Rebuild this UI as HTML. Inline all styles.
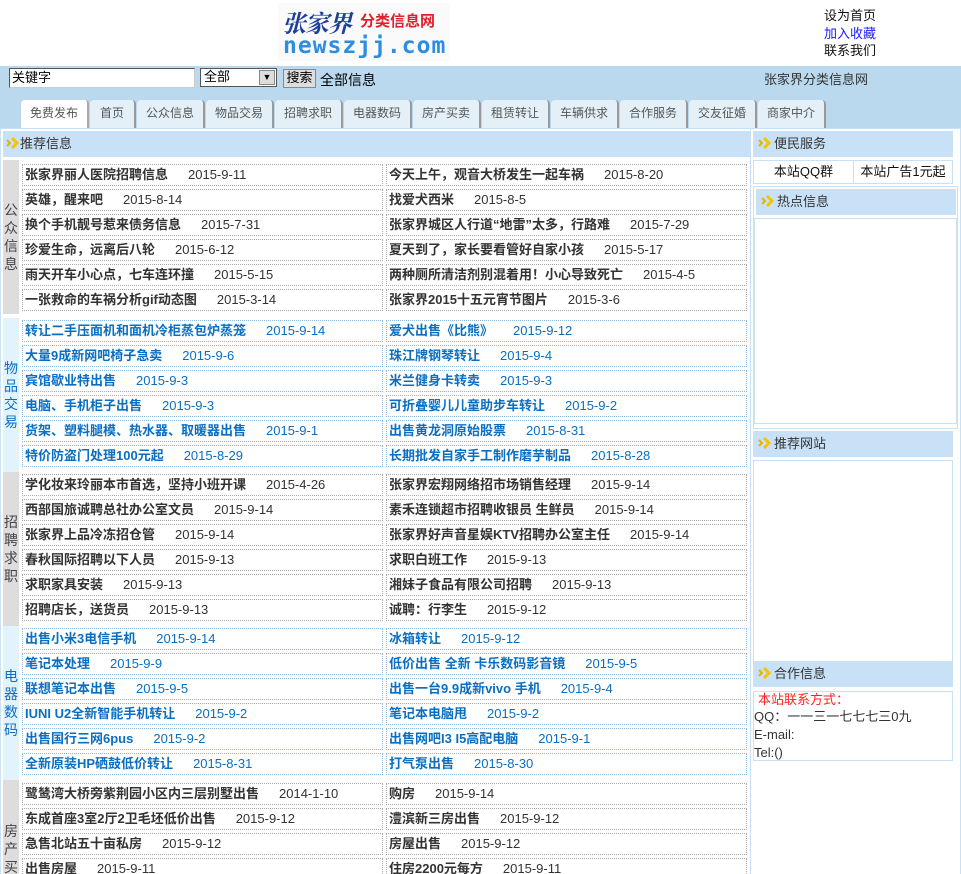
<!DOCTYPE html>
<html><head><meta charset="utf-8">
<style>
*{margin:0;padding:0;box-sizing:border-box}
html,body{width:961px;height:874px;overflow:hidden}
body{background:#fff;font-family:"Liberation Sans","Noto Sans CJK SC",sans-serif;font-size:13px;color:#333;position:relative}
.a{position:absolute}
.tab{position:absolute;top:100px;height:28px;background:#e4f0f8;border-right:2px solid #999;border-top-left-radius:4px;border-top-right-radius:4px;text-align:center;line-height:26px;color:#555;font-size:12px}
.hd{position:absolute;background:#c9e1f6;height:26px;line-height:26px;font-size:13px;color:#333}
.arr{display:inline-block;width:14px;height:12px;margin:0 2px 0 5px;vertical-align:-1px}
.sec{position:absolute;left:3px;width:745px;height:154px;overflow:hidden}
.lab{position:absolute;left:0;top:0;width:16px;height:100%;background:#ddd;display:flex;align-items:center;justify-content:center;font-size:14px;line-height:18px;text-align:center;color:#444}
.sec.b .lab{background:#e3f3fd;color:#0a6fc2}
.c{position:absolute;height:22px;width:361px;border:1px dotted #aaa;line-height:20px;padding-left:2px;white-space:nowrap;overflow:hidden}
.sec.b .c{border-color:#8fb8dd;color:#0a6fc2}
.c b{font-weight:bold;margin-right:20px}
.L{left:19px}.R{left:383px}
</style></head><body>
<svg width="0" height="0" style="position:absolute"><defs><g id="ar"><path d="M1 3 L4 6 L1 9" fill="none" stroke="#e8b000" stroke-width="2"/><path d="M6 1 L11 6 L6 11" fill="none" stroke="#f5c400" stroke-width="3"/></g></defs></svg>
<div class="a" style="left:278px;top:3px;width:172px;height:58px;background:#fafafa"></div>
<div class="a" style="left:282px;top:4px;font-family:'Noto Serif CJK SC',serif;font-size:24px;font-weight:bold;color:#1d3f9a;font-style:italic;letter-spacing:-1px">张家界</div>
<div class="a" style="left:360px;top:10px;font-size:15px;font-weight:bold;color:#e0202a">分类信息网</div>
<div class="a" style="left:283px;top:33px;font-family:'DejaVu Sans Mono',monospace;font-size:23px;font-weight:bold;color:#2d8ee0;letter-spacing:1px">newszjj.com</div>
<div class="a" style="left:824px;top:7px;line-height:17.5px;font-size:13px;color:#111">设为首页<br><span style="color:#1a1aff">加入收藏</span><br>联系我们</div>

<div class="a" style="left:0;top:66px;width:961px;height:62px;background:#bad8ee"></div>
<div class="a" style="left:9px;top:68px;width:186px;height:20px;background:#fff;border:1px solid #555;border-right-color:#ccc;border-bottom-color:#ccc;line-height:17px;padding-left:2px;font-size:13px;color:#000">关键字</div>
<div class="a" style="left:200px;top:68px;width:77px;height:19px;background:#fff;border:1px solid #555;line-height:16px;padding-left:3px;color:#000">全部<span class="a" style="right:1px;top:1px;width:16px;height:15px;background:#ddd;border:1px solid #888;font-size:9px;line-height:13px;text-align:center">▼</span></div>
<div class="a" style="left:283px;top:69px;width:33px;height:19px;background:#ddd;border:1px solid #888;line-height:16px;text-align:center;color:#000">搜索</div>
<div class="a" style="left:320px;top:70px;font-size:14px;color:#000">全部信息</div>
<div class="a" style="left:764px;top:69px;color:#333">张家界分类信息网</div>

<div class="tab" style="left:21px;width:68px;background:#fff;border-right:2px solid #aaa">免费发布</div>
<div class="tab" style="left:90px;width:46px">首页</div>
<div class="tab" style="left:137px;width:68px">公众信息</div>
<div class="tab" style="left:206px;width:68px">物品交易</div>
<div class="tab" style="left:275px;width:68px">招聘求职</div>
<div class="tab" style="left:344px;width:68px">电器数码</div>
<div class="tab" style="left:413px;width:68px">房产买卖</div>
<div class="tab" style="left:482px;width:68px">租赁转让</div>
<div class="tab" style="left:551px;width:68px">车辆供求</div>
<div class="tab" style="left:620px;width:68px">合作服务</div>
<div class="tab" style="left:689px;width:68px">交友征婚</div>
<div class="tab" style="left:758px;width:68px">商家中介</div>

<div class="a" style="left:0;top:128px;width:961px;height:746px;border:1px solid #c9e1f6;border-bottom:none"></div>
<div class="a" style="left:1px;top:129px;width:750px;height:745px;border-right:1px solid #c9e1f6"></div>
<div class="hd" style="left:3px;top:131px;width:747px"><svg class="arr" style="margin-left:3px;margin-right:0"><use href="#ar"/></svg>推荐信息</div>

<div class="sec" style="top:160px"><div class="lab">公<br>众<br>信<br>息</div>
<div class="c L" style="top:4px"><b>张家界丽人医院招聘信息</b>2015-9-11</div><div class="c R" style="top:4px"><b>今天上午，观音大桥发生一起车祸</b>2015-8-20</div>
<div class="c L" style="top:29px"><b>英雄，醒来吧</b>2015-8-14</div><div class="c R" style="top:29px"><b>找爱犬西米</b>2015-8-5</div>
<div class="c L" style="top:54px"><b>换个手机靓号惹来债务信息</b>2015-7-31</div><div class="c R" style="top:54px"><b>张家界城区人行道“地雷”太多，行路难</b>2015-7-29</div>
<div class="c L" style="top:79px"><b>珍爱生命，远离后八轮</b>2015-6-12</div><div class="c R" style="top:79px"><b>夏天到了，家长要看管好自家小孩</b>2015-5-17</div>
<div class="c L" style="top:104px"><b>雨天开车小心点，七车连环撞</b>2015-5-15</div><div class="c R" style="top:104px"><b>两种厕所清洁剂别混着用！小心导致死亡</b>2015-4-5</div>
<div class="c L" style="top:129px"><b>一张救命的车祸分析gif动态图</b>2015-3-14</div><div class="c R" style="top:129px"><b>张家界2015十五元宵节图片</b>2015-3-6</div>
</div>

<div class="sec b" style="top:318px"><div class="lab">物<br>品<br>交<br>易</div>
<div class="c L" style="top:2px"><b>转让二手压面机和面机冷柜蒸包炉蒸笼</b>2015-9-14</div><div class="c R" style="top:2px"><b>爱犬出售《比熊》</b>2015-9-12</div>
<div class="c L" style="top:27px"><b>大量9成新网吧椅子急卖</b>2015-9-6</div><div class="c R" style="top:27px"><b>珠江牌钢琴转让</b>2015-9-4</div>
<div class="c L" style="top:52px"><b>宾馆歇业特出售</b>2015-9-3</div><div class="c R" style="top:52px"><b>米兰健身卡转卖</b>2015-9-3</div>
<div class="c L" style="top:77px"><b>电脑、手机柜子出售</b>2015-9-3</div><div class="c R" style="top:77px"><b>可折叠婴儿儿童助步车转让</b>2015-9-2</div>
<div class="c L" style="top:102px"><b>货架、塑料腿模、热水器、取暖器出售</b>2015-9-1</div><div class="c R" style="top:102px"><b>出售黄龙洞原始股票</b>2015-8-31</div>
<div class="c L" style="top:127px"><b>特价防盗门处理100元起</b>2015-8-29</div><div class="c R" style="top:127px"><b>长期批发自家手工制作磨芋制品</b>2015-8-28</div>
</div>

<div class="sec" style="top:472px"><div class="lab">招<br>聘<br>求<br>职</div>
<div class="c L" style="top:2px"><b>学化妆来玲丽本市首选，坚持小班开课</b>2015-4-26</div><div class="c R" style="top:2px"><b>张家界宏翔网络招市场销售经理</b>2015-9-14</div>
<div class="c L" style="top:27px"><b>西部国旅诚聘总社办公室文员</b>2015-9-14</div><div class="c R" style="top:27px"><b>素禾连锁超市招聘收银员 生鲜员</b>2015-9-14</div>
<div class="c L" style="top:52px"><b>张家界上品冷冻招仓管</b>2015-9-14</div><div class="c R" style="top:52px"><b>张家界好声音星娱KTV招聘办公室主任</b>2015-9-14</div>
<div class="c L" style="top:77px"><b>春秋国际招聘以下人员</b>2015-9-13</div><div class="c R" style="top:77px"><b>求职白班工作</b>2015-9-13</div>
<div class="c L" style="top:102px"><b>求职家具安装</b>2015-9-13</div><div class="c R" style="top:102px"><b>湘妹子食品有限公司招聘</b>2015-9-13</div>
<div class="c L" style="top:127px"><b>招聘店长，送货员</b>2015-9-13</div><div class="c R" style="top:127px"><b>诚聘：行李生</b>2015-9-12</div>
</div>

<div class="sec b" style="top:626px"><div class="lab">电<br>器<br>数<br>码</div>
<div class="c L" style="top:2px"><b>出售小米3电信手机</b>2015-9-14</div><div class="c R" style="top:2px"><b>冰箱转让</b>2015-9-12</div>
<div class="c L" style="top:27px"><b>笔记本处理</b>2015-9-9</div><div class="c R" style="top:27px"><b>低价出售 全新 卡乐数码影音镜</b>2015-9-5</div>
<div class="c L" style="top:52px"><b>联想笔记本出售</b>2015-9-5</div><div class="c R" style="top:52px"><b>出售一台9.9成新vivo 手机</b>2015-9-4</div>
<div class="c L" style="top:77px"><b>IUNI U2全新智能手机转让</b>2015-9-2</div><div class="c R" style="top:77px"><b>笔记本电脑甩</b>2015-9-2</div>
<div class="c L" style="top:102px"><b>出售国行三网6pus</b>2015-9-2</div><div class="c R" style="top:102px"><b>出售网吧I3 I5高配电脑</b>2015-9-1</div>
<div class="c L" style="top:127px"><b>全新原装HP硒鼓低价转让</b>2015-8-31</div><div class="c R" style="top:127px"><b>打气泵出售</b>2015-8-30</div>
</div>

<div class="sec" style="top:780px;height:94px"><div class="lab" style="height:154px;align-items:flex-start;padding-top:42px">房<br>产<br>买<br>卖</div>
<div class="c L" style="top:3px"><b>鹭鸶湾大桥旁紫荆园小区内三层别墅出售</b>2014-1-10</div><div class="c R" style="top:3px"><b>购房</b>2015-9-14</div>
<div class="c L" style="top:28px"><b>东成首座3室2厅2卫毛坯低价出售</b>2015-9-12</div><div class="c R" style="top:28px"><b>澧滨新三房出售</b>2015-9-12</div>
<div class="c L" style="top:53px"><b>急售北站五十亩私房</b>2015-9-12</div><div class="c R" style="top:53px"><b>房屋出售</b>2015-9-12</div>
<div class="c L" style="top:78px"><b>出售房屋</b>2015-9-11</div><div class="c R" style="top:78px"><b>住房2200元每方</b>2015-9-11</div>
</div>

<div class="hd" style="left:753px;top:131px;width:200px"><svg class="arr"><use href="#ar"/></svg>便民服务</div>
<div class="a" style="left:753px;top:160px;width:200px;height:24px;border:1px solid #c9e1f6;display:flex;line-height:22px;color:#111">
<div style="width:100px;text-align:center;border-right:1px solid #c9e1f6">本站QQ群</div><div style="width:98px;text-align:center">本站广告1元起</div></div>
<div class="a" style="left:753px;top:186px;width:205px;height:243px;border:1px solid #c9e1f6"></div>
<div class="hd" style="left:756px;top:189px;width:200px"><svg class="arr"><use href="#ar"/></svg>热点信息</div>
<div class="a" style="left:754px;top:218px;width:203px;height:206px;border:1px solid #c9e1f6"></div>
<div class="hd" style="left:753px;top:431px;width:200px"><svg class="arr"><use href="#ar"/></svg>推荐网站</div>
<div class="a" style="left:753px;top:460px;width:200px;height:202px;border:1px solid #c9e1f6"></div>
<div class="hd" style="left:753px;top:661px;width:200px"><svg class="arr"><use href="#ar"/></svg>合作信息</div>
<div class="a" style="left:753px;top:691px;width:200px;height:70px;border:1px solid #c9e1f6;line-height:18px;font-size:13px;color:#333">
<div style="color:#f22;padding-left:4px;line-height:16px">本站联系方式：</div>QQ：一一三一七七七三0九<br>E-mail:<br>Tel:()</div>
</body></html>
